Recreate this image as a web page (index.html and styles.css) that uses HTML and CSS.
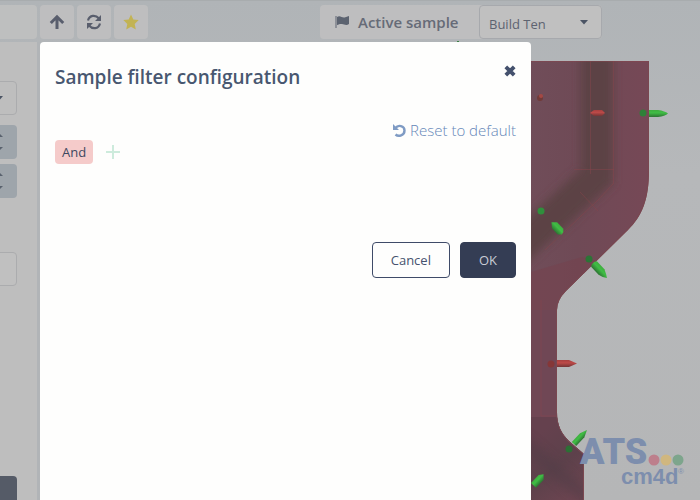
FILE: index.html
```html
<!DOCTYPE html>
<html lang="en">
<head>
    <meta charset="UTF-8">
    <meta name="viewport" content="width=device-width, initial-scale=1.0">
    <title>Sample filter configuration</title>
    <link rel="stylesheet" href="styles.css">
</head>
<body>
    <div class="app">
        <!-- 3D part view -->
        <svg class="scene" viewBox="0 0 700 500" preserveAspectRatio="xMinYMin slice" role="img" aria-label="Part model">
            <defs>
                <linearGradient id="bg" x1="0" y1="0" x2="0" y2="1">
                    <stop offset="0" stop-color="#b0b4b7"/>
                    <stop offset="0.35" stop-color="#b6b8ba"/>
                    <stop offset="1" stop-color="#b5b6b7"/>
                </linearGradient>
                <linearGradient id="part" gradientUnits="userSpaceOnUse" x1="530" y1="0" x2="649" y2="0">
                    <stop offset="0" stop-color="#704d59"/>
                    <stop offset="0.4" stop-color="#6f4a56"/>
                    <stop offset="1" stop-color="#764856"/>
                </linearGradient>
                <linearGradient id="leg" gradientUnits="userSpaceOnUse" x1="530" y1="440" x2="575" y2="500">
                    <stop offset="0" stop-color="#65414e"/>
                    <stop offset="0.5" stop-color="#5d414b"/>
                    <stop offset="1" stop-color="#6d4551"/>
                </linearGradient>
                <linearGradient id="green" x1="0" y1="0" x2="0" y2="1">
                    <stop offset="0" stop-color="#3fae3f"/>
                    <stop offset="0.4" stop-color="#40bd45"/>
                    <stop offset="1" stop-color="#2d7433"/>
                </linearGradient>
                <linearGradient id="red" x1="0" y1="0" x2="0" y2="1">
                    <stop offset="0" stop-color="#a8403f"/>
                    <stop offset="0.4" stop-color="#bd4a48"/>
                    <stop offset="1" stop-color="#743536"/>
                </linearGradient>
                <filter id="shade" x="-50%" y="-50%" width="200%" height="200%">
                    <feGaussianBlur stdDeviation="5"/>
                </filter>
                <clipPath id="outline">
                    <path d="M400 61H649V170C649 200 642 216 628 230L566 291Q557 300 557 310V412C557 426 562 434 569 441L584 454V500H400Z"/>
                </clipPath>
            </defs>
            <rect width="700" height="500" fill="url(#bg)"/>
            <g clip-path="url(#outline)">
                <rect x="400" y="61" width="249" height="439" fill="url(#part)"/>
                <path d="M597 30V176L510 256" fill="none" stroke="#5b4344" stroke-width="32" filter="url(#shade)"/>
                <path d="M531 272L582 257 600 262 545 330H531Z" fill="#74434e" opacity="0.6"/>
                <rect x="400" y="310" width="157" height="110" fill="#704755"/>
                <path d="M400 417H557L584 444V500H400Z" fill="url(#leg)"/>
                <path d="M520 440L590 500" fill="none" stroke="#513e46" stroke-width="14" opacity="0.5" filter="url(#shade)"/>
                <path d="M590.500 61V174M613.500 61V184M574 169.500H614M580 192L598 211M613 184L598 200 545 250M541 300V416H557M531 61.500H649" fill="none" stroke="#8a454c" stroke-width="1" opacity="0.45"/>
                <path d="M649 61V170C649 200 642 216 628 230L566 291Q557 300 557 310V412C557 426 562 434 569 441L584 454V500" fill="none" stroke="#7a4750" stroke-width="2"/>
            </g>
            <!-- measurement points -->
            <path d="M649 110H658Q665 111 668 113.500 665 116 658 117H649Z" fill="url(#green)"/>
            <circle cx="643" cy="113" r="3.500" fill="#2f8038"/>
            <ellipse cx="540" cy="98" rx="3" ry="3" fill="#713a38"/>
            <circle cx="541" cy="96" r="2" fill="#a44844"/>
            <path d="M590 113L594 110H602L605 113 602 116H594Z" fill="url(#red)"/>
            <circle cx="541" cy="211" r="3.500" fill="#2f8f3c"/>
            <path d="M-8 0L-4-4H5Q8-2 8 1L5 4H-3Z" transform="translate(557 228) rotate(46)" fill="url(#green)"/>
            <circle cx="589" cy="259" r="3.500" fill="#2b7436"/>
            <path d="M0-4H11Q16-2 19 0 16 3 11 4H0Q-3 0 0-4Z" transform="translate(594 264) rotate(47)" fill="url(#green)"/>
            <path d="M557 360H569L577 363.500 569 367H557Z" fill="url(#red)"/>
            <circle cx="551" cy="364" r="3.500" fill="#853738"/>
            <path d="M0-3H12L19 0 12 3H0Z" transform="translate(574 444) rotate(-47)" fill="url(#green)"/>
            <circle cx="569" cy="449" r="3.500" fill="#2b7034"/>
            <path d="M-7-3H4L8 0 4 4H-7Z" transform="translate(538 480) rotate(-46)" fill="url(#green)"/>
            <rect x="457" y="41" width="2" height="2" fill="#3b8245"/>
            <!-- brand -->
            <g class="brand">
                <text class="brand-name" x="580" y="464">ATS</text>
                <text class="brand-product" x="621" y="484">cm4d</text>
                <text class="brand-mark" x="678" y="474">®</text>
                <circle cx="654" cy="460" r="5.500" fill="#bd7f8c"/>
                <circle cx="666" cy="460" r="5.500" fill="#d0b77f"/>
                <circle cx="678" cy="460" r="5.500" fill="#7da58c"/>
            </g>
        </svg>

        <div class="toolbar">
            <div class="toolbar-panel"></div>
            <button class="tool" aria-label="Up">
                <svg width="16" height="16" viewBox="0 0 16 16"><path d="M8 15V3M1.800 9L8 2.800l6.200 6.200" fill="none" stroke="#595e6d" stroke-width="3"/></svg>
            </button>
            <button class="tool" aria-label="Refresh">
                <svg width="16" height="16" viewBox="0 0 16 16"><path d="M2 6.500C3.500 .800 9.500 .500 13 4.500M14 9.500C12.500 15.200 6.500 15.500 3 11.500" fill="none" stroke="#595e6d" stroke-width="2.200"/><path d="M15 1v6H9zM1 15V9h6z" fill="#595e6d"/></svg>
            </button>
            <button class="tool" aria-label="Favourite">
                <svg width="16" height="16" viewBox="0 0 16 16"><path d="M8 .500l2.300 5 5.400.600-4 3.800 1.100 5.600L8 12.800l-4.800 2.700 1.100-5.600-4-3.800 5.400-.600z" fill="#c2b354"/></svg>
            </button>
            <div class="sample">
                <label class="sample-label" for="sample">
                    <svg width="14" height="14" viewBox="0 0 14 14"><path d="M1 1v12" stroke="#5c6370" stroke-width="1"/><path d="M2 2c3-2 5 1 7.500.500L14 1v8c-3 2-5 0-7 0-2-.300-3 .300-5 1z" fill="#5c6370"/></svg>
                    Active sample
                </label>
                <div class="select-wrap">
                    <select class="sample-select" id="sample">
                        <option>Build Ten</option>
                    </select>
                    <svg class="caret" width="8" height="5" viewBox="0 0 8 5"><path d="M0 0h8L4 4.500z" fill="#4b5464"/></svg>
                </div>
            </div>
        </div>

        <div class="sidebar">
            <button class="field drop" aria-label="Open list"><svg width="8" height="5" viewBox="0 0 8 5"><path d="M0 0h8L4 4.500z" fill="#4b5464"/></svg></button>
            <div class="field stepper">
                <button aria-label="Increase"><svg width="8" height="4" viewBox="0 0 8 4"><path d="M0 4h8L4 0z" fill="#59626e"/></svg></button>
                <button aria-label="Decrease"><svg width="8" height="4" viewBox="0 0 8 4"><path d="M0 0h8L4 4z" fill="#59626e"/></svg></button>
            </div>
            <div class="field stepper">
                <button aria-label="Increase"><svg width="8" height="4" viewBox="0 0 8 4"><path d="M0 4h8L4 0z" fill="#59626e"/></svg></button>
                <button aria-label="Decrease"><svg width="8" height="4" viewBox="0 0 8 4"><path d="M0 0h8L4 4z" fill="#59626e"/></svg></button>
            </div>
            <input class="field filter" type="text" aria-label="Value">
            <button class="field apply" aria-label="Apply"></button>
        </div>

        <div class="dialog" role="dialog" aria-labelledby="title">
            <div class="dialog-header">
                <h1 id="title">Sample filter configuration</h1>
                <button class="close" aria-label="Close">
                    <svg width="12" height="12" viewBox="0 0 12 12"><path d="M1.800 1.800l8.400 8.400M10.200 1.800l-8.400 8.400" stroke="#44516d" stroke-width="3.800"/></svg>
                </button>
            </div>
            <a class="reset" href="#">
                <svg width="13" height="13" viewBox="0 0 13 13"><path d="M2.500 4C5 .500 11.500 1.500 11.500 6.500S5.500 13 2.500 10.500" fill="none" stroke="#7f9bc4" stroke-width="2.400"/><path d="M0 0v6h6z" fill="#7f9bc4"/></svg>
                Reset to default
            </a>
            <div class="rule">
                <button class="operator">And</button>
                <button class="add" aria-label="Add rule">
                    <svg width="14" height="14" viewBox="0 0 14 14"><path d="M7 0v14M0 7h14" stroke="#cdebdc" stroke-width="2"/></svg>
                </button>
            </div>
            <div class="actions">
                <button class="btn">Cancel</button>
                <button class="btn btn-primary">OK</button>
            </div>
        </div>
    </div>
</body>
</html>
```
FILE: styles.css
```css
* { box-sizing: border-box; }
body {
    margin: 0;
    font-family: 'Open Sans', 'Noto Sans', sans-serif;
    font-size: 13px;
    color: #3d4860;
}
button, input, select { font: inherit; color: inherit; margin: 0; }
button { padding: 0; border: 0; background: none; cursor: pointer; }
svg { display: block; flex: none; }
.app {
    position: relative;
    height: 100vh;
    overflow: hidden;
    display: flex;
    flex-direction: column;
    background: #b5b7b9;
}
.scene {
    position: absolute;
    top: 0;
    left: 0;
    width: 100%;
    height: 100%;
}
.brand { fill: #7d8ead; }
.brand-name { font: 900 36px Roboto, sans-serif; }
.brand-product { font: bold 22px 'Liberation Sans', sans-serif; }
.brand-mark { font: 8px 'Liberation Sans', sans-serif; }

.toolbar {
    position: relative;
    display: flex;
    gap: 3px;
    padding-top: 4px;
    height: 42px;
    flex: none;
    border-top: 1px solid #a8acae;
}
.toolbar-panel {
    width: 37px;
    height: 34px;
    background: #bebfbf;
    border-radius: 0 4px 4px 0;
}
.tool {
    width: 34px;
    height: 34px;
    display: flex;
    align-items: center;
    justify-content: center;
    background: #bebebf;
    border-radius: 4px;
}
.sample {
    display: flex;
    height: 34px;
    margin-left: 169px;
    background: #bebebf;
    border-radius: 4px;
}
.sample-label {
    display: flex;
    align-items: center;
    gap: 9px;
    width: 159px;
    padding-left: 15px;
    font-size: 15px;
    font-weight: 600;
    color: #666b77;
}
.select-wrap { position: relative; }
.sample-select {
    width: 123px;
    height: 34px;
    padding: 3px 9px 0;
    appearance: none;
    background: #c0c0c0;
    border: 1px solid #a7a9ad;
    border-radius: 4px;
    color: #5d6370;
}
.caret {
    position: absolute;
    top: 15px;
    right: 14px;
}

.sidebar {
    position: relative;
    flex: 1;
    width: 40px;
    padding: 39px 20px 0 0;
    display: flex;
    flex-direction: column;
    align-items: flex-end;
    background: #bebebe;
    border-right: 3px solid #b1b4b7;
    overflow: hidden;
}
.field {
    flex: none;
    width: 120px;
    height: 34px;
    border-radius: 4px;
}
.drop {
    display: flex;
    align-items: center;
    justify-content: flex-end;
    padding-right: 13px;
    border: 1px solid #abacae;
    margin-bottom: 10px;
}
.stepper {
    display: flex;
    flex-direction: column;
    align-items: flex-end;
    justify-content: center;
    gap: 10px;
    padding-right: 14px;
    background: #9ea5ab;
    margin-bottom: 5px;
}
.filter {
    margin-top: 49px;
    background: #c0c0c0;
    border: 1px solid #abacae;
}
.apply {
    margin-top: 190px;
    background: #555b67;
}

.dialog {
    position: absolute;
    top: 42px;
    left: 40px;
    width: 491px;
    bottom: 0;
    padding: 20px 15px;
    background: #fefefd;
    border-radius: 4px 4px 0 0;
}
.dialog-header {
    display: flex;
    justify-content: space-between;
    height: 30px;
    margin-bottom: 28px;
}
.dialog-header h1 {
    margin: 0;
    font-size: 19px;
    line-height: 30px;
    font-weight: 600;
    color: #485770;
}
.close {
    height: 18px;
}
.reset {
    display: flex;
    align-items: center;
    justify-content: flex-end;
    gap: 4px;
    font-size: 15px;
    line-height: 20px;
    font-weight: 300;
    color: #6587b8;
    text-decoration: none;
}
.rule {
    display: flex;
    align-items: center;
    gap: 13px;
}
.operator {
    height: 24px;
    padding: 0 7px;
    background: #f5cbca;
    border-radius: 4px;
}
.actions {
    display: flex;
    justify-content: flex-end;
    gap: 10px;
    margin-top: 78px;
}
.btn {
    height: 36px;
    padding: 0 18px;
    border: 1px solid #3f4b68;
    border-radius: 4px;
    background: #fefefd;
    color: #45526e;
}
.btn-primary {
    background: #343d54;
    border-color: #343d54;
    color: #c8ccd4;
}
```
